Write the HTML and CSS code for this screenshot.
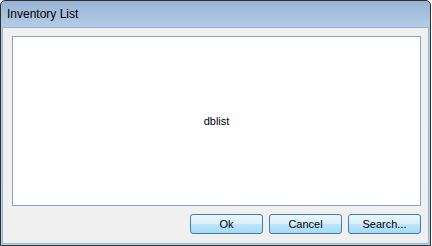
FILE: index.html
```html
<!DOCTYPE html>
<html lang="en">
<head>
  <meta charset="UTF-8" />
  <title>Inventory List</title>
  <link rel="stylesheet" href="styles.css">
</head>
<body>
  <div class="window">
    <div class="titlebar">Inventory List</div>
    <div class="client">
      <div class="list">dblist</div>
      <div class="buttons">
        <button class="btn">Ok</button>
        <button class="btn">Cancel</button>
        <button class="btn">Search...</button>
      </div>
    </div>
  </div>
</body>
</html>
```

FILE: styles.css
```css
* {
  box-sizing: border-box;
}
body {
  margin: 0;
  background: #fff;
  font-family: 'Liberation Sans', Arial, sans-serif;
  font-size: 11px;
  color: #000;
}
.window {
  width: 431px;
  height: 246px;
  border: 1px solid #2e2e2e;
  border-radius: 5px 5px 0 0;
  background: linear-gradient(to bottom, #98b4d5 0px, #b4cce6 26px, #bcd3eb 100%);
  padding: 0 1px 1px;
  display: flex;
  flex-direction: column;
}
.titlebar {
  height: 26px;
  padding-left: 5px;
  display: flex;
  align-items: center;
  font-size: 12px;
  color: #000;
}
.client {
  flex: 1;
  background: #f0f0f0;
  border: 1px solid #9bb5d1;
  padding: 8px 7px 9px 9px;
  display: flex;
  flex-direction: column;
}
.list {
  flex: 1;
  background: #fff;
  border: 1px solid #82a5c3;
  display: flex;
  align-items: center;
  justify-content: center;
}
.buttons {
  margin-top: 8px;
  display: flex;
  justify-content: flex-end;
  gap: 6px;
}
.btn {
  width: 73px;
  height: 20px;
  border: 1px solid #3c7fb1;
  border-radius: 3px;
  background: linear-gradient(to bottom, #ecf7fd 0%, #d9f0fc 48%, #bee6fd 52%, #a7d9f5 100%);
  font-family: 'Liberation Sans', Arial, sans-serif;
  font-size: 11px;
  color: #000;
  padding: 0;
}
```
